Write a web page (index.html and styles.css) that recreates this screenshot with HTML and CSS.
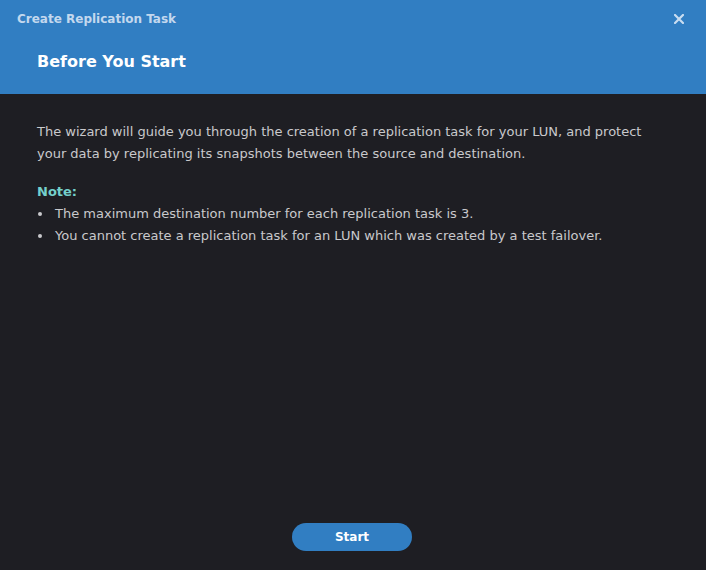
FILE: index.html
```html
<!DOCTYPE html>
<html>
<head>
<meta charset="utf-8">
<link rel="stylesheet" href="styles.css">
</head>
<body>
<div class="dialog">
  <header class="head">
    <div class="titlebar">
      <span class="title">Create Replication Task</span>
      <span class="close" aria-label="Close">
        <svg width="10" height="10" viewBox="0 0 10 10"><path d="M1 1 L9 9 M9 1 L1 9" stroke="#c9ddf1" stroke-width="2.2" stroke-linecap="square"/></svg>
      </span>
    </div>
    <h1 class="step">Before You Start</h1>
  </header>
  <main class="content">
    <p class="intro">The wizard will guide you through the creation of a replication task for your LUN, and protect your data by replicating its snapshots between the source and destination.</p>
    <div class="note">Note:</div>
    <ul class="list">
      <li>The maximum destination number for each replication task is 3.</li>
      <li>You cannot create a replication task for an LUN which was created by a test failover.</li>
    </ul>
  </main>
  <footer class="foot">
    <button class="btn">Start</button>
  </footer>
</div>
</body>
</html>
```
FILE: styles.css
```css
* { box-sizing: border-box; }
html, body { margin: 0; padding: 0; }
body {
  width: 706px;
  height: 570px;
  background: #1e1e23;
  font-family: "DejaVu Sans", Verdana, sans-serif;
}
.dialog {
  display: flex;
  flex-direction: column;
  height: 570px;
}
.head {
  background: #317ec2;
  height: 94px;
  display: flex;
  flex-direction: column;
}
.titlebar {
  display: flex;
  align-items: center;
  justify-content: space-between;
  height: 37px;
  padding: 0 22px 0 17px;
}
.title {
  color: #c3d8ee;
  font-size: 12px;
  font-weight: bold;
}
.close { display: flex; }
.step {
  margin: 0;
  padding: 15px 0 0 37px;
  color: #ffffff;
  font-size: 16px;
  font-weight: bold;
}
.content {
  flex: 1;
  padding: 27px 37px 0 37px;
  color: #c9c9cc;
  font-size: 13px;
  line-height: 22px;
}
.intro { margin: 0 0 16px 0; }
.note {
  color: #74d0cc;
  font-weight: bold;
}
.list {
  margin: 0;
  padding: 0;
  list-style: none;
}
.list li {
  position: relative;
  padding-left: 18px;
}
.list li::before {
  content: "";
  position: absolute;
  left: 1px;
  top: 9px;
  width: 4px;
  height: 4px;
  border-radius: 50%;
  background: #c9c9cc;
}
.foot {
  display: flex;
  justify-content: center;
  padding: 0 2px 19px 0;
}
.btn {
  width: 120px;
  height: 28px;
  border: none;
  border-radius: 14px;
  background: #317ec2;
  color: #ffffff;
  font-family: "DejaVu Sans", Verdana, sans-serif;
  font-size: 12px;
  font-weight: bold;
}
```
